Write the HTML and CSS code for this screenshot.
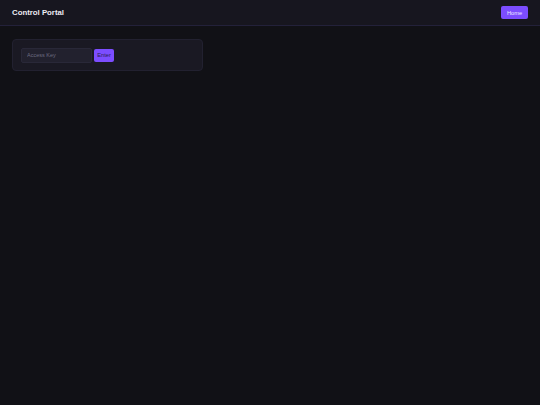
FILE: index.html
```html
<!DOCTYPE html>
<html>
<head>
<meta charset="utf-8">
<link rel="stylesheet" href="styles.css">
</head>
<body>
<header class="topbar">
  <h1 class="title">Control Portal</h1>
  <button class="btn home">Home</button>
</header>
<main class="main">
  <div class="card">
    <input class="key" type="text" placeholder="Access Key">
    <button class="btn enter">Enter</button>
  </div>
</main>
</body>
</html>
```

FILE: styles.css
```css
html, body {
  margin: 0;
  padding: 0;
  background: #111116;
  font-family: "Liberation Sans", Arial, sans-serif;
  height: 100%;
}
.topbar {
  height: 25px;
  box-sizing: content-box;
  border-bottom: 1px solid #23213a;
  background: #17161f;
  display: flex;
  align-items: center;
  justify-content: space-between;
  padding: 0 12px 0 12px;
}
.title {
  margin: 0;
  font-size: 7.8px;
  font-weight: bold;
  color: #ecebf2;
}
.btn {
  border: none;
  background: #7c4dff;
  font-family: "Liberation Sans", Arial, sans-serif;
  font-size: 5.7px;
  border-radius: 2px;
  padding: 0;
  display: flex;
  align-items: center;
  justify-content: center;
}
.home {
  width: 27px;
  height: 13px;
  color: #ece8ff;
}
.main {
  padding: 13px 12px;
}
.card {
  width: 191px;
  height: 32px;
  box-sizing: border-box;
  background: #1a1923;
  border: 1px solid #222130;
  border-radius: 4px;
  display: flex;
  align-items: center;
  gap: 2px;
  padding: 0 8px;
}
.key {
  width: 71px;
  height: 15px;
  box-sizing: border-box;
  background: #22212e;
  border: 1px solid #292838;
  border-radius: 2px;
  font-family: "Liberation Sans", Arial, sans-serif;
  font-size: 5.5px;
  padding: 0 4px 0 5px;
  color: #d0d0dc;
  outline: none;
}
.key::placeholder {
  color: #6c6b80;
}
.enter {
  width: 20px;
  height: 13px;
  color: #2a1d52;
}
```
